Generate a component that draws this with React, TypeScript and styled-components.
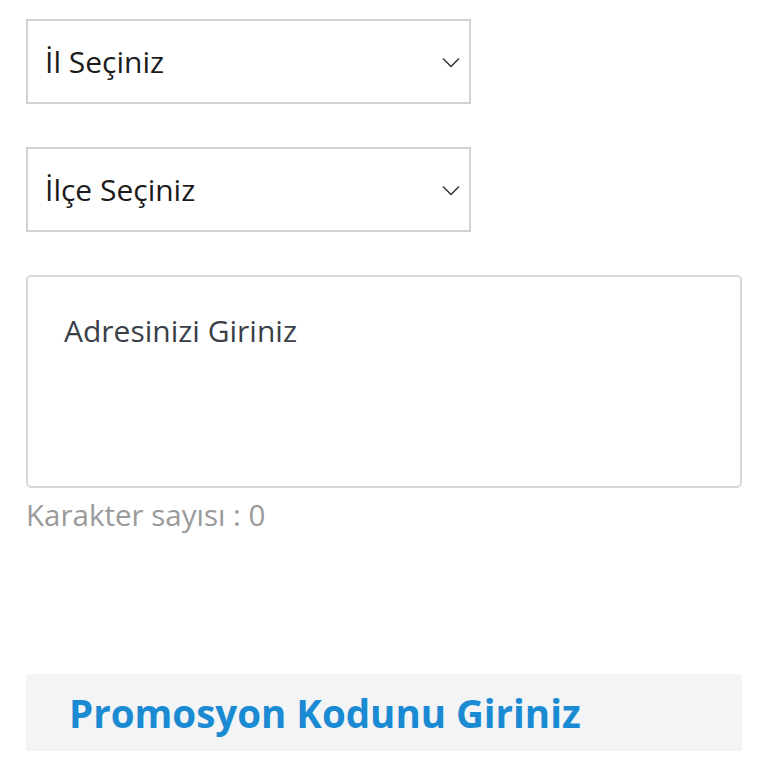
import React from 'react';
import styled, { createGlobalStyle } from 'styled-components';

const GlobalStyle = createGlobalStyle`
  html, body {
    margin: 0;
    padding: 0;
    background: #fff;
  }
  body {
    font-family: 'Open Sans', 'Noto Sans', sans-serif;
  }
`;

const Page = styled.div`
  display: flex;
  flex-direction: column;
  padding: 19px 26px 0 26px;
  width: 716px;
`;

const SelectBox = styled.div`
  display: flex;
  align-items: center;
  justify-content: space-between;
  box-sizing: border-box;
  width: 445px;
  height: 85px;
  padding: 0 9px 0 17px;
  border: 2px solid #d2d2d2;
  margin-bottom: 43px;
  font-size: 30px;
  color: #1b1b1b;
`;

const Chevron = styled.svg`
  width: 18px;
  height: 11px;
  margin-top: 2px;
`;

const TextArea = styled.div`
  box-sizing: border-box;
  height: 213px;
  padding: 34px 36px;
  border: 2px solid #d8d8d8;
  border-radius: 5px;
  font-size: 30px;
  color: #3a3f48;
  line-height: 40px;
`;

const Counter = styled.div`
  margin-top: 8px;
  font-size: 29.5px;
  color: #9a9a9a;
  line-height: 38px;
`;

const PromoBar = styled.div`
  display: flex;
  align-items: center;
  margin-top: 140px;
  height: 77px;
  padding-left: 43px;
  background: #f3f4f6;
  font-size: 38.5px;
  font-weight: 700;
  color: #1a8ad2;
`;

const Select: React.FC<{ label: string }> = ({ label }) => (
  <SelectBox>
    <span>{label}</span>
    <Chevron viewBox="0 0 18 11">
      <path d="M1 1.5 L9 9.5 L17 1.5" fill="none" stroke="#333" strokeWidth="1.5" />
    </Chevron>
  </SelectBox>
);

const App: React.FC = () => (
  <>
    <GlobalStyle />
    <Page>
      <Select label="İl Seçiniz" />
      <Select label="İlçe Seçiniz" />
      <TextArea>Adresinizi Giriniz</TextArea>
      <Counter>Karakter sayısı : 0</Counter>
      <PromoBar>Promosyon Kodunu Giriniz</PromoBar>
    </Page>
  </>
);

export default App;
